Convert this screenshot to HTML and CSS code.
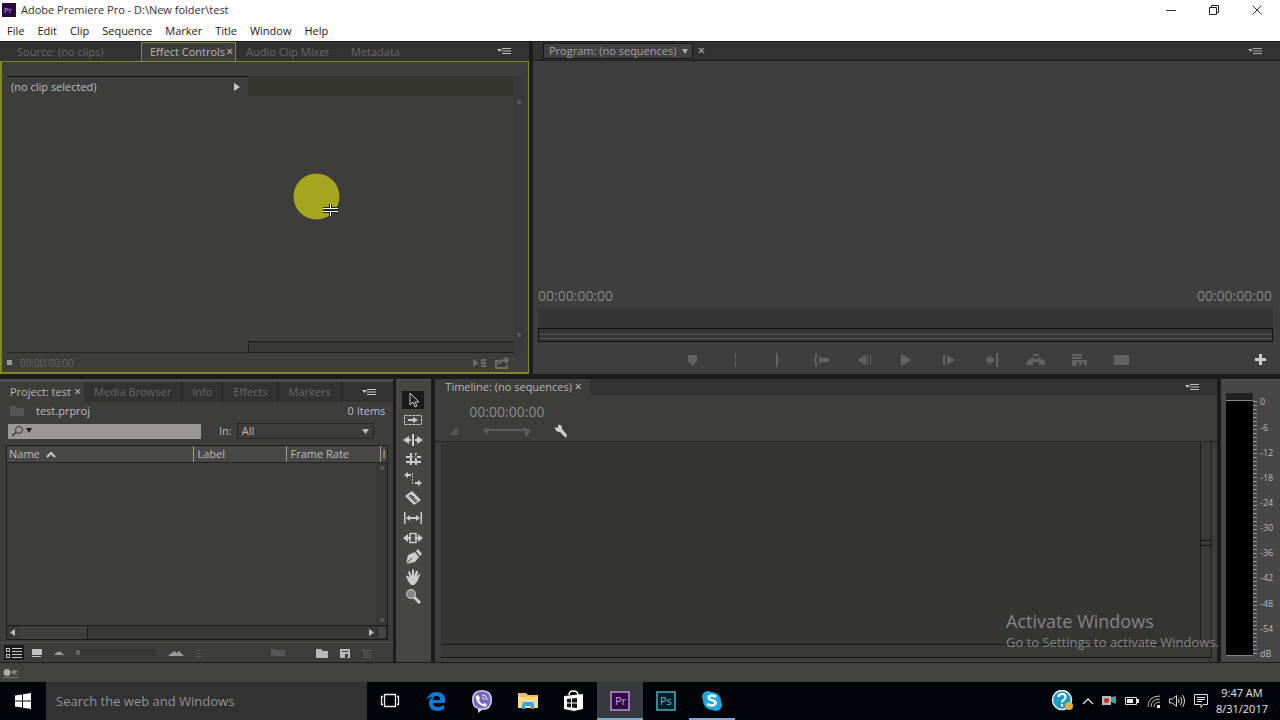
FILE: index.html
```
<!DOCTYPE html>
<html lang="en">
<head>
<meta charset="utf-8">
<title>Adobe Premiere Pro - D:\New folder\test</title>
<link rel="stylesheet" href="styles.css">
</head>
<body>
<header class="titlebar">
  <svg class="app-icon" width="14" height="14" viewBox="0 0 14 14"><rect width="14" height="14" fill="#2a0a3c"/><text x="2" y="10" font-size="8" fill="#c9a0e8">Pr</text></svg>
  <h1 class="app-title">Adobe Premiere Pro - D:\New folder\test</h1>
  <div class="win-buttons">
    <button aria-label="Minimize"><svg width="12" height="12"><path d="M1 6.500h10" stroke="#333"/></svg></button>
    <button aria-label="Restore"><svg width="12" height="12" fill="none" stroke="#222"><path d="M1.500 3.500h7v7h-7zM3.500 3v-1.500h7v7H9"/></svg></button>
    <button aria-label="Close"><svg width="12" height="12"><path d="M1.500 1.500l9 9M10.500 1.500l-9 9" stroke="#333"/></svg></button>
  </div>
</header>
<nav class="menubar">
  <button>File</button><button>Edit</button><button>Clip</button><button>Sequence</button><button>Marker</button><button>Title</button><button>Window</button><button>Help</button>
</nav>

<main class="workspace">
  <div class="upper">
    <section class="panel effect">
      <div class="tabs">
        <button class="tab dim source">Source: (no clips)</button>
        <button class="tab focused">Effect Controls <span class="x">×</span></button>
        <button class="tab dim mixer">Audio Clip Mixer</button>
        <button class="tab dim">Metadata</button>
        <button class="panel-menu" aria-label="Panel menu"><svg width="14" height="9" viewBox="0 0 14 9"><path d="M0 2h5L2.500 5z" fill="#bbb"/><path d="M5 1.500h9M5 4h9M5 6.500h9" stroke="#bbb"/></svg></button>
      </div>
      <div class="effect-body">
        <div class="clip-name"><span>(no clip selected)</span><svg width="6" height="8"><path d="M0 0v8l6-4z" fill="#c8c8c8"/></svg></div>
        <div class="effect-ruler"></div>
        <div class="effect-side"><span></span><span></span></div>
        <div class="effect-list"></div>
        <div class="effect-keys"></div>
        <div class="effect-zoom"></div>
        <div class="effect-foot">
          <svg width="5" height="5"><rect width="5" height="5" fill="#999"/></svg>
          <span class="tc-small">00:00:00:00</span>
          <svg class="push" width="14" height="10" fill="#6a6a68"><path d="M0 1l6 4-6 4zM8 1h5v2H9v1h4v5H8V7h3V6H8z"/></svg>
          <svg width="15" height="12" fill="none" stroke="#6e6e6c" stroke-width="2"><path d="M4 4H1v7h11V8M4 7c1-4 4-4 8-4M10 0l3 3-3 3"/></svg>
        </div>
      </div>
      <svg class="pointer" width="48" height="48" viewBox="0 0 48 48"><circle cx="23.500" cy="23.500" r="23" fill="#a5a51f"/><path d="M30 35.500h15M30 38.500h15M37.500 31v4M37.500 39v4" stroke="#222" stroke-width="3"/><path d="M30 35.500h15M30 38.500h15M37.500 31v4M37.500 39v4" stroke="#fff"/></svg>
    </section>

    <section class="panel program">
      <div class="tabs">
        <button class="program-tab">Program: (no sequences)<svg width="6" height="5"><path d="M0 0h6L3 5z" fill="#aaa"/></svg></button>
        <span class="x">×</span>
        <button class="panel-menu" aria-label="Panel menu"><svg width="14" height="9" viewBox="0 0 14 9"><path d="M0 2h5L2.500 5z" fill="#aaa"/><path d="M5 1.500h9M5 4h9M5 6.500h9" stroke="#aaa"/></svg></button>
      </div>
      <div class="viewer"></div>
      <div class="timecodes"><span>00:00:00:00</span><span>00:00:00:00</span></div>
      <div class="scrub"></div>
      <div class="zoom-track"></div>
      <div class="transport">
        <div class="transport-buttons">
          <button aria-label="Add marker"><svg width="16" height="14"><path d="M4 2h9v6l-4.500 5L4 8z"/></svg></button>
          <button aria-label="Mark in"><svg width="16" height="14"><path d="M8 0h2v1q-1 0-1 1v3l-1 2 1 2v5H8V9L7 7l1-2z"/></svg></button>
          <button aria-label="Mark out"><svg width="16" height="14"><path d="M6 0h2v14H6z"/></svg></button>
          <button aria-label="Go to in"><svg width="16" height="14"><path d="M2 0h2v5L3 7l1 2v5H2V9L1 7l1-2zM6 3l4 2h6v4h-6l-4 2z"/></svg></button>
          <button aria-label="Step back"><svg width="16" height="14"><path d="M1 7l9-5v10zM11 2h1v10h-1zM14 2h1v10h-1z"/></svg></button>
          <button aria-label="Play"><svg width="16" height="14"><path d="M2 1l11 6-11 6z"/></svg></button>
          <button aria-label="Step forward"><svg width="16" height="14"><path d="M1 2h2v10H1zM5 2l8 5-8 5z"/></svg></button>
          <button aria-label="Go to out"><svg width="16" height="14"><path d="M0 7l6-5v3h3v4H6v3zM11 0h2v5l1 2-1 2v5h-2z"/></svg></button>
          <button aria-label="Lift"><svg width="20" height="14"><path d="M1 8l6-4v2h5V4l7 4v4h-6V9H7v3H1zM7 1h6v2H7z"/></svg></button>
          <button aria-label="Extract"><svg width="18" height="14"><path d="M2 1h10v2H2zM2 4h10v2H2zM2 7h15v5h-3V9h-2v3H9V9H7v4H2z"/></svg></button>
          <button aria-label="Export frame"><svg width="16" height="14"><path d="M0 2h15v10H0z"/></svg></button>
        </div>
        <button class="plus" aria-label="Button editor"><svg width="11" height="11"><path d="M4 0h3v4h4v3H7v4H4V7H0V4h4z"/></svg></button>
      </div>
    </section>
  </div>

  <div class="lower">
    <section class="panel project">
      <div class="tabs">
        <button class="tab current">Project: test <span class="x">×</span></button>
        <button class="tab dim media">Media Browser</button>
        <button class="tab dim">Info</button>
        <button class="tab dim">Effects</button>
        <button class="tab dim">Markers</button>
        <button class="panel-menu" aria-label="Panel menu"><svg width="14" height="9" viewBox="0 0 14 9"><path d="M0 2h5L2.500 5z" fill="#ccc"/><path d="M5 1.500h9M5 4h9M5 6.500h9" stroke="#ccc"/></svg></button>
      </div>
      <div class="project-file"><svg width="14" height="10"><path d="M0 0h6l1 2h7v8H0z" fill="#555"/></svg><span>test.prproj</span><span class="push">0 Items</span></div>
      <div class="project-search">
        <div class="find"><svg width="22" height="12" viewBox="0 0 22 12"><circle cx="8" cy="5" r="3.500" fill="none" stroke="#333"/><path d="M5 7.500L1 11" stroke="#333" stroke-width="1.500"/><path d="M15 3h6l-3 5z" fill="#222"/></svg><input type="text" aria-label="Find"></div>
        <label for="scope">In:</label>
        <div class="scope"><select id="scope"><option>All</option></select><svg width="7" height="5"><path d="M0 0h7L3.500 5z" fill="#bbb"/></svg></div>
      </div>
      <div class="bin">
        <table class="columns"><thead><tr><th class="c-name">Name <svg width="10" height="7"><path d="M1 6l4-4 4 4" fill="none" stroke="#ccc" stroke-width="2"/></svg></th><th class="c-label">Label</th><th class="c-rate">Frame Rate</th><th class="c-more">I</th></tr></thead></table>
        <div class="bin-body"><div class="vbar"><span></span><span></span></div></div>
        <div class="hbar"><svg width="5" height="7"><path d="M5 0v7L0 3.500z"/></svg><span class="thumb"></span><svg class="push" width="5" height="7"><path d="M0 0v7l5-3.500z"/></svg><span class="corner"></span></div>
      </div>
      <div class="project-foot">
        <button class="pressed" aria-label="List view"><svg width="18" height="12" fill="#c8c8c8"><path d="M1 1h4v4H1zM1 7h4v4H1zM7 1h10v1H7zM7 4h10v1H7zM7 7h10v1H7zM7 10h10v1H7z"/><path d="M2 2h2v2H2zM2 8h2v2H2z" fill="#111"/></svg></button>
        <button aria-label="Icon view"><svg width="10" height="10" fill="#c0c0c0"><path d="M0 1h10v6H0zM0 8h9v1H0z"/></svg></button>
        <svg width="10" height="8" fill="#999"><path d="M0 6q5-7 10 0z"/></svg>
        <input class="icon-size" type="range" value="0" aria-label="Icon size">
        <svg width="16" height="8" fill="#999"><path d="M0 7l6-5 3 2 2-2 5 5z"/></svg>
        <svg class="sort" width="5" height="10" stroke="#555"><path d="M0 2.500h5M0 5.500h5M0 8.500h5"/></svg>
        <svg class="automate" width="15" height="9" fill="#555"><path d="M0 1h5l1 1h8v6H0z"/></svg>
        <button class="bin-new" aria-label="New bin"><svg width="12" height="10" fill="#b8b8b8"><path d="M0 1h5l2 2h5v7H0z"/></svg></button>
        <button aria-label="New item"><svg width="10" height="10" fill="#b8b8b8"><path d="M0 1h10v9H7V6H5v4H0z"/><path d="M2 3h6v1H2zM7 6h1v3H7z" fill="#444"/></svg></button>
        <button aria-label="Clear"><svg width="10" height="10" fill="none" stroke="#606060"><path d="M0 2.500h10M2.500 4v6M5 4v6M7.500 4v6"/></svg></button>
      </div>
    </section>

    <section class="panel tools">
      <div class="tool-list">
        <button class="pressed" aria-label="Selection"><svg viewBox="0 0 20 16"><path d="M7 1v12l3-3 2 5 2-1-2-4h4z" fill="#222" stroke="#ccc"/></svg></button>
        <button aria-label="Track select"><svg viewBox="0 0 20 16"><path d="M1.500 3.500h17v9h-17z" fill="none" stroke="#ccc" stroke-dasharray="3 1"/><path d="M5 7h5V5l5 3-5 3V9H5z"/></svg></button>
        <button aria-label="Ripple edit"><svg viewBox="0 0 20 16"><path d="M9 2h2v12H9zM0 8l6-4v3h2v2H6v3zM20 8l-6-4v3h-2v2h2v3z"/></svg></button>
        <button aria-label="Rolling edit"><svg viewBox="0 0 20 16"><path d="M7 2h2v12H7zM12 2h2v12h-2zM3 5h4V3l3 2.500L7 8V7H3zM18 5h-4V3l-3 2.500L14 8V7h4zM3 10h15v2H3z"/></svg></button>
        <button aria-label="Rate stretch"><svg viewBox="0 0 20 16"><path d="M1 4l4-3v2h3v2H5v2zM19 12l-4-3v2h-3v2h3v2z"/><path d="M9.500 2v12" stroke="#bbb" stroke-dasharray="2 1"/></svg></button>
        <button aria-label="Razor"><svg viewBox="0 0 20 16"><path d="M2 6l7-5 9 9-7 5z"/><path d="M6 6l2-1 6 6-2 1zM8 9l3-3" stroke="#444" fill="#888"/></svg></button>
        <button aria-label="Slip"><svg viewBox="0 0 20 16"><path d="M1 2h1.500v12H1zM17.500 2H19v12h-1.500zM3 8l4-3v2h6V5l4 3-4 3V9H7v2z"/></svg></button>
        <button aria-label="Slide"><svg viewBox="0 0 20 16"><path d="M0 8l5-4v3h10V4l5 4-5 4V9H5v3z"/><path d="M7 3.500h6v9H7z" fill="none" stroke="#ccc" stroke-width="1.500"/><path d="M8 6h4v4H8z" fill="#555"/></svg></button>
        <button aria-label="Pen"><svg viewBox="0 0 20 16"><path d="M3 15l2-9 7-3 4 5-4 5zM13 2l2-2 4 5-2 2z"/><path d="M3 15l6-6" stroke="#444"/></svg></button>
        <button aria-label="Hand"><svg viewBox="0 0 20 16"><path d="M3 7q1-1 2 0l2 2-2-6q1-2 2 0l2 4V1q1-2 2 0v6l2-5q2-1 2 1l-1 5 2-3q2-1 1 1l-3 7-3 3H8l-3-4z"/></svg></button>
        <button aria-label="Zoom"><svg viewBox="0 0 20 16"><circle cx="8" cy="6" r="4.500" fill="#888" stroke="#ccc"/><path d="M11 9l6 6" stroke="#ccc" stroke-width="3"/></svg></button>
      </div>
    </section>

    <section class="panel timeline">
      <div class="tabs">
        <button class="tab current">Timeline: (no sequences) <span class="x">×</span></button>
        <button class="panel-menu" aria-label="Panel menu"><svg width="14" height="9" viewBox="0 0 14 9"><path d="M0 2h5L2.500 5z" fill="#bbb"/><path d="M5 1.500h9M5 4h9M5 6.500h9" stroke="#bbb"/></svg></button>
      </div>
      <div class="timeline-head">
        <span class="timecode">00:00:00:00</span>
        <div class="timeline-icons">
          <svg width="12" height="10" fill="#565656"><path d="M1 9l7-7 2 1v6z"/></svg>
          <svg class="snap" width="48" height="10" fill="#5c5c5c"><path d="M0 4l6-3v2h34V1l8 3-4 6h-2V5H5v4z"/></svg>
          <button aria-label="Timeline settings"><svg width="14" height="14" fill="#d0d0d0"><path d="M1 3l3 1V1q4-1 4 4l5 6-1 3-6-6Q1 8 1 3z"/></svg></button>
        </div>
      </div>
      <div class="tracks"><div class="track-area"></div><div class="track-scroll"><span></span><span></span></div></div>
      <div class="timeline-scroll"></div>
    </section>

    <section class="panel meters">
      <div class="meter"></div>
      <div class="ticks"></div>
      <div class="scale"><span>0</span><span>-6</span><span>-12</span><span>-18</span><span>-24</span><span>-30</span><span>-36</span><span>-42</span><span>-48</span><span>-54</span><span>dB</span></div>
    </section>
  </div>
</main>

<footer class="status"><svg width="18" height="10"><circle cx="5" cy="4.500" r="3.500" fill="#aaa"/><path d="M9 4l3-2 4 1-3 2 3 2-5-1z" fill="#888"/><path d="M1 9.500h16" stroke="#777"/></svg></footer>

<div class="watermark"><p class="wm-title">Activate Windows</p><p>Go to Settings to activate Windows.</p></div>

<div class="taskbar">
  <button class="start" aria-label="Start"><svg width="16" height="16" fill="#fff"><path d="M0 2.500l7-1v6H0zM8 1.300L16 0v7.500H8zM0 8.500h7v6l-7-1zM8 8.500h8V16l-8-1.300z"/></svg></button>
  <input class="search" type="text" placeholder="Search the web and Windows" aria-label="Search the web and Windows">
  <button class="app" aria-label="Task view"><svg width="20" height="16" fill="none" stroke="#eee"><path d="M4.500 1.500h11v12h-11zM3 3.500H1.500v8H3M17 3.500h1.500v8H17" stroke-width="1.300"/></svg></button>
  <button class="app" aria-label="Edge"><svg width="20" height="20" viewBox="0 0 20 20"><path d="M1 9Q3 1 10.500 1 19 1 19 9v3H7q0 4 5 4 3 0 6-2v4q-3 2-7 2-8-1-8-8 0-4 4-6Q3 6 1 9zm6 0h7q0-4-3.500-4T7 9z" fill="#0c7cd8"/></svg></button>
  <button class="app" aria-label="Viber"><svg width="24" height="24" viewBox="0 0 24 24"><path d="M12 1q10 0 10 10t-10 10l-4 3v-4Q2 18 2 11 2 1 12 1z" fill="#d8d0f4"/><path d="M12 2.500q8.500 0 8.500 8.500T12 19.500 3.500 11 12 2.500z" fill="#7768bd"/><path d="M8 6l2 3-1 2q1 3 4 4l2-1 2 2q-2 3-4 1-6-2-7-8-1-2 2-3z" fill="#fff"/><path d="M12 6q5 0 5 5M12 8.500q2.500 0 2.500 2.500" fill="none" stroke="#fff"/></svg></button>
  <button class="app" aria-label="File Explorer"><svg width="22" height="20" viewBox="0 0 22 20"><path d="M1 2h8l2 2h10v13H1z" fill="#e9bf62"/><path d="M1 6h20v11H1z" fill="#f7dc8c"/><path d="M5 18v-4q0-3 3-3h6q3 0 3 3v4h-3v-3H8v3z" fill="#39a5d8"/></svg></button>
  <button class="app" aria-label="Store"><svg width="22" height="24" viewBox="0 0 22 24"><path d="M1 7l19-2v15l-9 2-10-2z" fill="#fff"/><path d="M6 6q0-4 4-4 5 0 5 4" fill="none" stroke="#fff" stroke-width="1.500"/><path d="M4 10l4-.5v4H4zM9 9.500l5-.5v4.500H9zM4 14.500h4v4l-4-.5zM9 14.500h5V19l-5-.5z" fill="#111"/></svg></button>
  <button class="app running" aria-label="Premiere Pro"><svg width="20" height="20"><rect x="1" y="1" width="18" height="18" fill="#2d0c40" stroke="#c58be0" stroke-width="1.500"/><text x="5" y="14" font-size="11" fill="#d49cf0">Pr</text></svg></button>
  <button class="app" aria-label="Photoshop"><svg width="20" height="20"><rect x="1" y="1" width="18" height="18" fill="#061c28" stroke="#45aebf" stroke-width="1.500"/><text x="4" y="14" font-size="11" fill="#4fc3d6">Ps</text></svg></button>
  <button class="app open" aria-label="Skype"><svg width="22" height="22" viewBox="0 0 22 22"><circle cx="7" cy="7" r="6" fill="#1fa6de"/><circle cx="15" cy="15" r="6" fill="#1fa6de"/><circle cx="11" cy="11" r="9" fill="#1fa6de"/><path d="M15 7q-2-2-5-1.500-3 1-2 3 1 1.500 4 2 3 1 2.500 3-1 2-4 2-3 0-4-2" fill="none" stroke="#fff" stroke-width="2.500"/></svg></button>
  <div class="tray">
    <svg width="24" height="22" viewBox="0 0 24 22"><circle cx="11" cy="10" r="9.500" fill="#1f9ac6" stroke="#e8f4fa" stroke-width="1.500"/><path d="M7.500 7q0-3 3.500-3t3.500 3q0 2-2 3-1.500 1-1.500 2.500M11 14v2.500" fill="none" stroke="#fff" stroke-width="2"/><circle cx="18" cy="16" r="4" fill="#e8b030"/></svg>
    <svg width="12" height="8" fill="none" stroke="#ddd" stroke-width="1.300"><path d="M1 7l5-5 5 5"/></svg>
    <svg width="16" height="12"><path d="M1 1h9v9H1z" fill="#bbb"/><path d="M10 2l5-1v8l-5-2z" fill="#30a8a8"/><circle cx="5.500" cy="5.500" r="2.500" fill="#d02828"/></svg>
    <svg width="16" height="10"><path d="M1.500 1.500h11v7h-11z" fill="none" stroke="#ddd"/><path d="M3 3h6v4H3zM13 3h2v4h-2z" fill="#eee"/></svg>
    <svg width="14" height="14" fill="none" stroke="#bbb"><path d="M1 13Q1 2 13 2M4 13q0-8 9-8M7 13q0-5 6-5"/><path d="M10 11h3v3h-3z" fill="#fff" stroke="none"/></svg>
    <svg width="18" height="14" fill="none" stroke="#ddd"><path d="M1.500 5h3l4-3.500v11L4.500 9h-3zM10.500 5q1 2 0 4M12.500 3q3 4 0 8M14.500 1q4 6 0 12"/></svg>
    <svg width="16" height="16" fill="none" stroke="#ddd"><path d="M1.500 1.500h13v10H10l-2 3v-3H1.500zM4 4.500h8M4 6.500h8M4 8.500h5"/></svg>
    <div class="clock"><time>9:47 AM</time><time>8/31/2017</time></div>
  </div>
</div>
</body>
</html>
```
FILE: styles.css
```
* { box-sizing: border-box; }
body {
  margin: 0;
  min-height: 100vh;
  display: flex;
  flex-direction: column;
  position: relative;
  background: #1c1c1c;
  color: #bdbdbd;
  font: 11px/16px "Open Sans", "Noto Sans", sans-serif;
}
button, input, select { font: inherit; color: inherit; }
button { border: 0; padding: 0; background: none; }
svg { display: block; flex: none; }
.push { margin-left: auto; }

.titlebar { display: flex; align-items: center; gap: 5px; height: 20px; padding: 0 2px; background: #fdfdfd; color: #333; }
.app-title { margin: 0; font-size: 11px; font-weight: 400; }
.win-buttons { margin-left: auto; display: flex; }
.win-buttons button { width: 43px; display: flex; justify-content: center; }
.menubar { display: flex; gap: 13px; height: 21px; padding-left: 7px; background: #fdfdfd; color: #1a1a1a; }
.titlebar, .menubar { flex: none; }

.workspace { flex: 1; display: flex; flex-direction: column; gap: 5px; padding-top: 1px; }
.upper, .lower { display: flex; }
.upper { flex: 333 1 0; gap: 4px; }
.lower { flex: 283 1 0; gap: 3px; }
.panel { display: flex; flex-direction: column; background: #3d3d3b; min-width: 0; }
.tabs { flex: none; display: flex; align-items: center; height: 19px; background: #323232; }
.tab { height: 100%; padding: 0 10px; white-space: nowrap; }
.dim { color: #686868; }
.x { font-size: 12px; color: #ccc; }
.panel-menu { margin-left: auto; }

.effect { position: relative; flex: 529 1 0; }
.effect .tabs { padding-right: 18px; }
.source { width: 141px; text-align: left; padding-left: 17px; }
.focused { width: 95px; padding: 0 2px 0 8px; display: flex; align-items: center; justify-content: space-between; background: #3d3d3b; border: 1px solid #7f8b1c; border-bottom: 0; color: #b5b5ae; }
.mixer { width: 105px; text-align: left; }
.effect-body {
  flex: 1;
  display: grid;
  grid-template-columns: 241px 1fr 10px;
  grid-template-rows: 20px 1fr 12px 19px;
  padding: 14px 4px 0 5px;
  border: 2px solid #7f8b1c;
  border-width: 1px 1px 2px 2px;
}
.clip-name { display: flex; align-items: center; justify-content: space-between; padding: 0 8px 0 4px; border-top: 1px solid #161616; }
.effect-ruler { background: #353530; }
.effect-side { grid-row: 1 / 4; grid-column: 3; display: flex; flex-direction: column; justify-content: space-between; align-items: center; padding: 24px 0 16px; background: #393940; }
.effect-side span { width: 4px; height: 4px; background: #555; }
.effect-list { grid-row: 2 / 4; border-bottom: 1px solid #242424; }
.effect-zoom { grid-column: 2; border: 1px solid #1e1e1e; border-right: 0; background: #383836; }
.effect-foot { grid-column: 1 / 4; display: flex; align-items: center; gap: 8px; padding-right: 14px; }
.tc-small { color: #686866; font-size: 10px; }
.pointer { position: absolute; left: 293px; top: 131px; }

.program { flex: 747 1 0; background: #3e3e3e; }
.program .tabs { padding: 0 18px 0 10px; gap: 5px; border-bottom: 1px solid #1b1b1b; }
.program-tab { display: flex; align-items: center; justify-content: space-between; width: 150px; height: 16px; padding: 0 4px 0 5px; border: 1px solid #191919; background: #414141; color: #a0a0a0; white-space: nowrap; }
.viewer { flex: 1; }
.timecodes { display: flex; justify-content: space-between; height: 20px; padding: 0 8px 0 5px; color: #858585; font-size: 14px; }
.scrub { height: 20px; margin: 0 7px 0 5px; background: #353535; }
.zoom-track { height: 14px; margin: 0 7px 0 5px; border: 1px solid #111; background: linear-gradient(#353535 5px, #505050 5px, #505050 6px, #353535 6px, #353535 9px, #505050 9px, #505050 10px, #353535 10px); }
.transport { display: grid; grid-template-columns: 1fr auto 1fr; align-items: center; height: 32px; padding-top: 3px; }
.transport-buttons { grid-column: 2; display: flex; fill: #636363; }
.transport-buttons button { width: 43px; display: flex; justify-content: center; }
.plus { justify-self: end; margin-right: 14px; fill: #ccc; }

.project { flex: 394 1 0; border-top: 3px solid #4c4c4a; }
.project .tabs { height: 20px; padding-right: 17px; }
.current { background: #3d3d3b; color: #b8b8b8; }
.project .current { width: 84px; padding: 0 3px 0 10px; display: flex; align-items: center; justify-content: space-between; }
.project .dim { border-right: 1px solid #222; }
.project-file { display: flex; align-items: center; gap: 12px; height: 18px; padding: 0 8px 0 10px; }
.project-search { display: flex; align-items: center; height: 22px; padding: 0 19px 0 8px; }
.find { display: flex; align-items: center; width: 193px; height: 15px; padding-left: 3px; background: #999896; }
.find input { flex: 1; min-width: 0; height: 15px; padding: 0; border: 0; background: none; color: #222; }
.project-search label { margin: 0 5px 0 18px; }
.scope { flex: 1; height: 16px; display: flex; align-items: center; padding-right: 4px; border: 1px solid #262626; background: #3c3c3a; }
.scope select { flex: 1; appearance: none; height: 14px; padding: 0 4px; border: 0; background: none; line-height: 14px; }
.bin { flex: 1; display: flex; flex-direction: column; margin: 3px 5px 2px 6px; border: 1px solid #1c1c1c; }
.columns { table-layout: fixed; width: 100%; border-collapse: collapse; background: #484846; line-height: 16px; }
.columns th { padding: 0 0 0 4px; border-left: 1px solid #999; white-space: nowrap; text-align: left; font-weight: 400; }
.columns th:first-child { border-left: 0; padding-left: 2px; }
.columns svg { display: inline-block; margin-left: 3px; }
.columns .c-name { width: 186px; }
.columns .c-label { width: 93px; }
.columns .c-rate { width: 94px; }
.columns .c-more { padding-left: 2px; }
.bin-body { flex: 1; display: flex; justify-content: flex-end; border-top: 1px solid #222; }
.vbar { width: 11px; display: flex; flex-direction: column; justify-content: space-between; align-items: center; padding: 3px 0; background: #383836; }
.vbar span { width: 4px; height: 4px; background: #555; }
.hbar { display: flex; align-items: center; height: 14px; padding-left: 3px; border-top: 1px solid #1c1c1c; background: #383836; fill: #bbb; }
.thumb { width: 69px; height: 13px; margin-left: 4px; border-right: 1px solid #1c1c1c; background: #3f3f3d; }
.corner { width: 10px; height: 13px; margin-left: 3px; border: 1px solid #2a2a2a; background: #444; }
.project-foot { display: flex; align-items: center; gap: 12px; height: 20px; padding: 0 21px 0 4px; border-top: 1px solid #505050; }
.pressed { background: #1b1b1b; }
.project-foot .pressed { width: 20px; height: 15px; padding: 1px; margin-right: -4px; }
.icon-size { appearance: none; width: 80px; height: 7px; margin: 0; background: #353533; }
.icon-size::-webkit-slider-thumb { appearance: none; width: 4px; height: 5px; background: #666; }
.automate { margin-left: auto; }
.bin-new { margin-left: 18px; }

.tools { flex: none; width: 35px; padding: 11px 7px 0 6px; border-top: 1px solid #555; background: #464644; fill: #ccc; }
.tool-list { display: flex; flex-direction: column; justify-content: space-between; height: 214px; }
.tool-list button { width: 22px; height: 18px; padding: 1px; }
.tool-list svg { width: 20px; height: 16px; }

.timeline { flex: 783 1 0; margin-left: 1px; }
.timeline .tabs { height: 16px; padding-right: 18px; }
.timeline .current { padding: 0 8px 0 10px; }
.timeline-head { height: 47px; padding: 9px 0 0 13px; border-bottom: 1px solid #242424; }
.timecode { padding-left: 21px; color: #8a8a8a; font-size: 14px; }
.timeline-icons { display: flex; align-items: center; gap: 23px; height: 20px; }
.tracks { flex: 1; display: flex; margin-left: 6px; }
.track-area { flex: 1; background: #353533; border-right: 1px solid #191919; }
.track-scroll { width: 11px; margin-right: 5px; display: flex; flex-direction: column; gap: 4px; background: #3a3a38; border-right: 1px solid #222; }
.track-scroll span { flex: 1; border: 0 solid #151515; border-bottom-width: 1px; }
.track-scroll span + span { border-width: 1px 0 0; }
.timeline-scroll { height: 14px; margin: 0 5px 4px 6px; border: 1px solid #191919; border-left: 0; background: #3a3a38; }

.meters { flex: none; width: 59px; margin-left: 1px; flex-direction: row; padding: 13px 0 6px 5px; border-top: 1px solid #555; background: #474747; }
.meter { width: 27px; background: linear-gradient(#222 7px, #888 7px, #888 8px, #000 8px); border-bottom: 1px solid #8c8c3a; }
.ticks { width: 4px; margin: 8px 0 2px; background: repeating-linear-gradient(#999 0 1px, transparent 1px 4px); }
.scale { flex: 1; display: flex; flex-direction: column; justify-content: space-between; margin: 4px 0 -3px; padding-left: 3px; color: #b8b8b8; font-size: 9px; line-height: 10px; }

.status { flex: none; display: flex; align-items: center; height: 20px; padding-left: 2px; border-top: 1px solid #1c1c1c; background: #41413e; }
.watermark { position: absolute; left: calc(100% - 274px); bottom: 69px; color: #858585; font-size: 13px; line-height: 18px; white-space: nowrap; pointer-events: none; }
.watermark p { margin: 0; }
.watermark .wm-title { font-size: 18px; line-height: 24px; }

.taskbar { flex: none; display: flex; align-items: center; height: 38px; background: #03040a; color: #e6e6e6; }
.taskbar button { height: 100%; width: 46px; display: flex; align-items: center; justify-content: center; }
.search { width: 321px; height: 100%; padding: 0 10px; border: 0; background: #323232; font-size: 13px; }
.search::placeholder { color: #939393; opacity: 1; }
.taskbar .running { background: #38383f; box-shadow: inset 0 -2px #76a8d8; }
.taskbar .open { box-shadow: inset 0 -2px #76a8d8; }
.tray { margin-left: auto; display: flex; align-items: center; gap: 7px; padding-right: 12px; }
.clock { display: flex; flex-direction: column; align-items: center; font-size: 11px; line-height: 16px; }
```
